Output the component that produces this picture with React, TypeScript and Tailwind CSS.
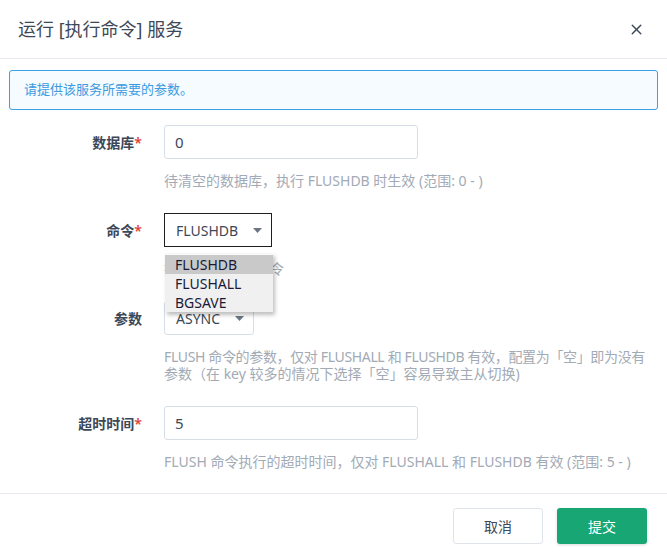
import {X} from 'lucide-react';

const font = {fontFamily: '"Noto Sans", "Noto Sans CJK SC", sans-serif'};

function Caret() {
  return (
    <svg width="9" height="5" viewBox="0 0 9 5" aria-hidden="true">
      <path d="M0 0h9L4.5 5z" fill="#6b7583" />
    </svg>
  );
}

function Field({
  label,
  required = false,
  hint,
  children,
}: {
  label: string;
  required?: boolean;
  hint: React.ReactNode;
  children: React.ReactNode;
}) {
  return (
    <div className="flex">
      <div className="flex h-[34px] w-[142px] flex-none items-center justify-end text-[14px] font-semibold text-[#3c4858]">
        {label}
        {required && <span className="text-[#e0403a]">*</span>}
      </div>
      <div className="ml-[22px] flex-1">
        {children}
        <div className="mt-[13px] text-[14px] leading-[17px] text-[#a2aab5]">{hint}</div>
      </div>
    </div>
  );
}

export default function App() {
  return (
    <div className="relative h-[553px] w-[667px] overflow-hidden bg-white" style={font}>
      <div className="flex h-[59px] items-center justify-between border-b border-[#e6eaf0] pl-[18px] pr-[22px]">
        <h2 className="text-[18px] text-[#3c4858]">运行 [执行命令] 服务</h2>
        <X className="h-[17px] w-[17px] text-[#3c4858]" strokeWidth={2} />
      </div>

      <div className="mx-[9px] mt-[11px] flex h-[40px] items-center rounded-[3px] border border-[#3aa0e2] bg-[#f5fbfe] px-[14px] text-[13px] text-[#3b9ae1]">
        请提供该服务所需要的参数。
      </div>

      <div className="mt-[15px] flex flex-col gap-[24px]">
        <Field label="数据库" required hint="待清空的数据库，执行 FLUSHDB 时生效 (范围: 0 - )">
          <div className="flex h-[34px] w-[254px] items-center rounded-[3px] border border-[#d6dee8] px-[10px] text-[15px] text-[#3c4858]">
            0
          </div>
        </Field>

        <Field label="命令" required hint="执行的 FLUSH 命令">
          <div className="relative">
            <div className="flex h-[34px] w-[108px] items-center justify-between border border-[#1f1f1f] pl-[11px] pr-[9px] text-[14px] text-[#3c4858]">
              FLUSHDB
              <Caret />
            </div>
            <div className="absolute left-[1px] top-[40px] z-10 w-[108px] border-t-2 border-[#f8f8f8] bg-[#f0f0f0] text-[14px] text-[#1a1a38] shadow-[2px_3px_4px_rgba(0,0,0,0.25)]">
              <div className="flex h-[19px] items-center bg-[#c9c9c9] pl-[10px]">FLUSHDB</div>
              <div className="flex h-[19px] items-center pl-[10px]">FLUSHALL</div>
              <div className="flex h-[19px] items-center pl-[10px]">BGSAVE</div>
            </div>
          </div>
        </Field>

        <Field
          label="参数"
          hint={
            <>
              <p className="whitespace-nowrap tracking-[-0.35px]">
                FLUSH 命令的参数，仅对 FLUSHALL 和 FLUSHDB 有效，配置为「空」即为没有
              </p>
              <p className="whitespace-nowrap">参数（在 key 较多的情况下选择「空」容易导致主从切换)</p>
            </>
          }
        >
          <div className="flex h-[34px] w-[90px] items-center justify-between rounded-[3px] border border-[#d6dee8] pl-[11px] pr-[9px] text-[14px] text-[#3c4858]">
            ASYNC
            <Caret />
          </div>
        </Field>

        <Field
          label="超时时间"
          required
          hint="FLUSH 命令执行的超时时间，仅对 FLUSHALL 和 FLUSHDB 有效 (范围: 5 - )"
        >
          <div className="flex h-[34px] w-[254px] items-center rounded-[3px] border border-[#d6dee8] px-[10px] text-[15px] text-[#3c4858]">
            5
          </div>
        </Field>
      </div>

      <div className="absolute inset-x-0 top-[493px] flex justify-end gap-[14px] border-t border-[#e6eaf0] pr-[20px] pt-[14px]">
        <button
          type="button"
          className="h-[36px] w-[90px] rounded-[3px] border border-[#dfe4ea] bg-white text-[14px] text-[#3c4858]"
        >
          取消
        </button>
        <button
          type="button"
          className="h-[36px] w-[90px] rounded-[3px] bg-[#18a774] text-[14px] text-white shadow-[0_1px_3px_rgba(0,0,0,0.15)]"
        >
          提交
        </button>
      </div>
    </div>
  );
}
